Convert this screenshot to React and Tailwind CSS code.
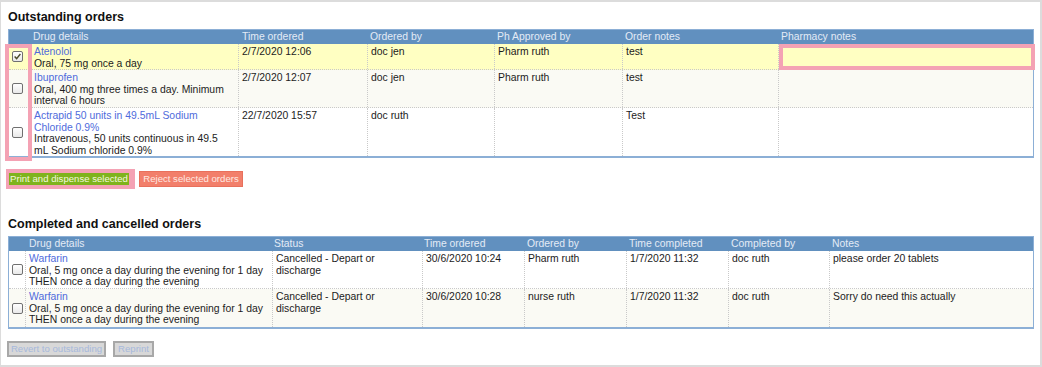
import React from "react";

const outstanding = [
  {
    id: 1,
    checked: true,
    drug: "Atenolol",
    details: ["Oral, 75 mg once a day"],
    time: "2/7/2020 12:06",
    orderedBy: "doc jen",
    approvedBy: "Pharm ruth",
    notes: "test",
    height: "h-[26px]",
    bg: "bg-[#ffffc2]",
  },
  {
    id: 2,
    checked: false,
    drug: "Ibuprofen",
    details: ["Oral, 400 mg three times a day. Minimum", "interval 6 hours"],
    time: "2/7/2020 12:07",
    orderedBy: "doc jen",
    approvedBy: "Pharm ruth",
    notes: "test",
    height: "h-[38px]",
    bg: "bg-[#fafaf4]",
  },
  {
    id: 3,
    checked: false,
    drug: ["Actrapid 50 units in 49.5mL Sodium", "Chloride 0.9%"],
    details: ["Intravenous, 50 units continuous in 49.5", "mL Sodium chloride 0.9%"],
    time: "22/7/2020 15:57",
    orderedBy: "doc ruth",
    approvedBy: "",
    notes: "Test",
    height: "h-[48px]",
    bg: "bg-white",
  },
];

const completed = [
  {
    id: 1,
    time: "30/6/2020 10:24",
    orderedBy: "Pharm ruth",
    notes: "please order 20 tablets",
    bg: "bg-white",
  },
  {
    id: 2,
    time: "30/6/2020 10:28",
    orderedBy: "nurse ruth",
    notes: "Sorry do need this actually",
    bg: "bg-[#fafaf4]",
  },
];

const Checkbox = ({ checked }) => (
  <span className="w-[11px] h-[11px] flex items-center justify-center rounded-[2px] border border-[#707070] bg-gradient-to-b from-white to-[#e9e9e9]">
    {checked && (
      <svg width="9" height="9" viewBox="0 0 9 9">
        <path d="M1.6 4.5 L3.6 6.6 L7.4 2" fill="none" stroke="#4b4b2a" strokeWidth="1.4" />
      </svg>
    )}
  </span>
);

const Lines = ({ lines, className = "" }) => (
  <div className={className}>
    {(Array.isArray(lines) ? lines : [lines]).map((l, i) => (
      <div key={i} className="whitespace-nowrap">
        {l}
      </div>
    ))}
  </div>
);

const cell = "border-l border-dotted border-[#c9c9c9] pl-[3px] pt-[2px]";

export default function App() {
  return (
    <div className="w-[1042px] h-[367px] bg-white border-t-2 border-r-2 border-b-2 border-l border-[#dcdcdc] pl-[7px] font-['Liberation_Sans',Arial,sans-serif] text-[10.4px] leading-[11.5px] text-[#1c1c1c] relative overflow-hidden">
      {/* Outstanding orders */}
      <h2 className="mt-[8px] mb-[4px] text-[12.5px] leading-[15px] font-bold text-[#111]">
        Outstanding orders
      </h2>

      <div className="relative w-[1026px] border border-b-2 border-[#8cafd6]">
        {/* header */}
        <div className="flex h-[14px] bg-[#6190bf] text-[#e3ebf6] leading-[14px]">
          <div className="w-[21px]" />
          <div className="w-[208px] pl-[3px]">Drug details</div>
          <div className="w-[129px] pl-[4px]">Time ordered</div>
          <div className="w-[127px] pl-[3px]">Ordered by</div>
          <div className="w-[128px] pl-[3px]">Ph Approved by</div>
          <div className="w-[156px] pl-[3px]">Order notes</div>
          <div className="w-[255px] pl-[3px]">Pharmacy notes</div>
        </div>

        {outstanding.map((row, i) => (
          <div
            key={row.id}
            className={`flex ${row.height} ${row.bg} ${
              i < outstanding.length - 1 ? "border-b border-dotted border-[#c9c9c9]" : ""
            }`}
          >
            <div className="w-[21px] pl-[3px] flex items-center">
              <Checkbox checked={row.checked} />
            </div>
            <div className={`w-[208px] ${cell}`}>
              <Lines lines={row.drug} className="text-[#4f6bdc]" />
              <Lines lines={row.details} />
            </div>
            <div className={`w-[129px] ${cell}`}>{row.time}</div>
            <div className={`w-[127px] ${cell}`}>{row.orderedBy}</div>
            <div className={`w-[128px] ${cell}`}>{row.approvedBy}</div>
            <div className={`w-[156px] ${cell}`}>{row.notes}</div>
            <div className="w-[255px] border-l border-dotted border-[#c9c9c9]">
              {i === 0 && (
                <input
                  type="text"
                  className="block w-[256px] h-[26px] -mb-[1px] border-4 border-[#f4a2b4] bg-[#ffffc2] outline-none"
                />
              )}
            </div>
          </div>
        ))}

        {/* highlight over checkbox column */}
        <div className="absolute left-[-4px] top-[14px] w-[27px] h-[117px] border-4 border-[#f4a2b4] pointer-events-none" />
      </div>

      {/* action buttons */}
      <div className="mt-[11px] flex items-center gap-[4px] -ml-[2px]">
        <div className="bg-[#f4a2b4] pl-[3px] pr-[6px] py-[4px]">
          <button className="block w-[120px] h-[12px] bg-[#7fb31c] text-[#f3f8dc] text-[9.6px] leading-[12px] text-center whitespace-nowrap">
            Print and dispense selected
          </button>
        </div>
        <button className="w-[104px] h-[16px] bg-[#f27f6b] border border-[#e8705c] text-[#ffe9e2] text-[9.6px] leading-[14px] text-center whitespace-nowrap">
          Reject selected orders
        </button>
      </div>

      {/* Completed and cancelled orders */}
      <h2 className="mt-[28px] mb-[4px] text-[12.5px] leading-[15px] font-bold text-[#111]">
        Completed and cancelled orders
      </h2>

      <div className="w-[1026px] border border-b-2 border-[#8cafd6]">
        <div className="flex h-[14px] bg-[#6190bf] text-[#e3ebf6] leading-[14px]">
          <div className="w-[16px]" />
          <div className="w-[247px] pl-[4px]">Drug details</div>
          <div className="w-[150px] pl-[2px]">Status</div>
          <div className="w-[102px] pl-[2px]">Time ordered</div>
          <div className="w-[102px] pl-[3px]">Ordered by</div>
          <div className="w-[102px] pl-[3px]">Time completed</div>
          <div className="w-[101px] pl-[3px]">Completed by</div>
          <div className="w-[204px] pl-[3px]">Notes</div>
        </div>

        {completed.map((row, i) => (
          <div
            key={row.id}
            className={`flex h-[38px] ${row.bg} ${
              i < completed.length - 1 ? "border-b border-dotted border-[#c9c9c9]" : ""
            }`}
          >
            <div className="w-[16px] pl-[3px] flex items-center">
              <Checkbox checked={false} />
            </div>
            <div className={`w-[247px] ${cell}`}>
              <Lines lines="Warfarin" className="text-[#4f6bdc]" />
              <Lines
                lines={[
                  "Oral, 5 mg once a day during the evening for 1 day",
                  "THEN once a day during the evening",
                ]}
              />
            </div>
            <div className={`w-[150px] ${cell}`}>
              <Lines lines={["Cancelled - Depart or", "discharge"]} />
            </div>
            <div className={`w-[102px] ${cell}`}>{row.time}</div>
            <div className={`w-[102px] ${cell}`}>{row.orderedBy}</div>
            <div className={`w-[102px] ${cell}`}>1/7/2020 11:32</div>
            <div className={`w-[101px] ${cell}`}>doc ruth</div>
            <div className={`w-[204px] ${cell}`}>{row.notes}</div>
          </div>
        ))}
      </div>

      {/* disabled buttons */}
      <div className="mt-[12px] -ml-[1px] flex gap-[7px]">
        <button
          disabled
          className="w-[99px] h-[16px] bg-[#d8d8d8] border-2 border-[#a8a8a8] text-[#a7b9dc] text-[9.6px] leading-[12px] text-center whitespace-nowrap"
        >
          Revert to outstanding
        </button>
        <button
          disabled
          className="w-[41px] h-[16px] bg-[#d8d8d8] border-2 border-[#a8a8a8] text-[#a7b9dc] text-[9.6px] leading-[12px] text-center whitespace-nowrap"
        >
          Reprint
        </button>
      </div>
    </div>
  );
}
